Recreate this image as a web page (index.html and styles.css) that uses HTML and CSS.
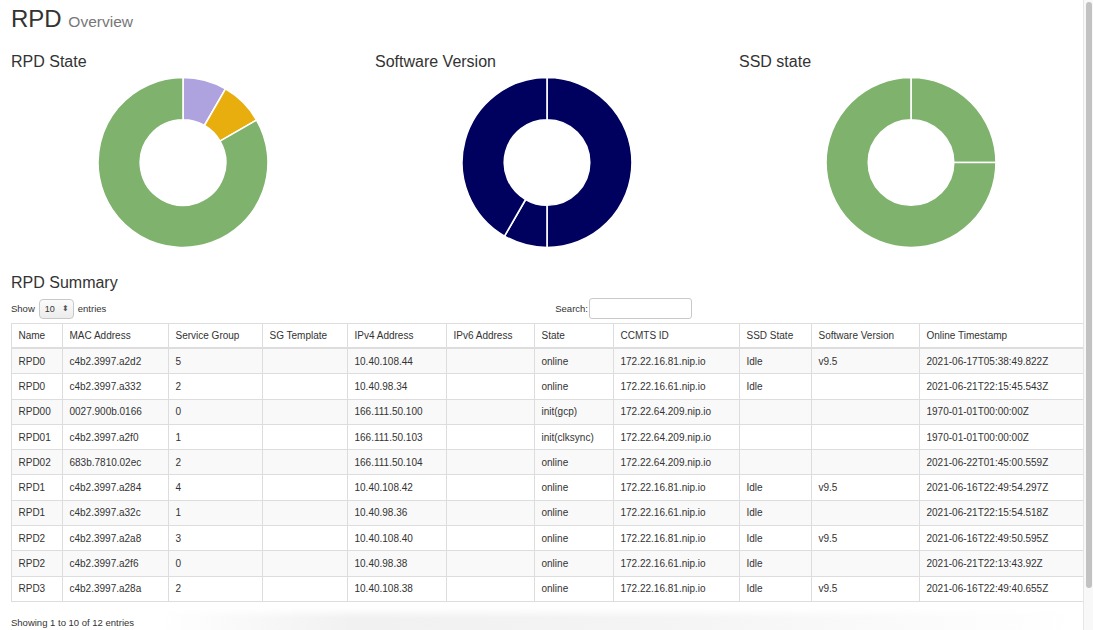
FILE: index.html
```html
<!DOCTYPE html>
<html lang="en">
<head>
<meta charset="utf-8">
<title>RPD Overview</title>
<link rel="stylesheet" href="styles.css">
</head>
<body>
<div class="page">
  <h1 class="page-title">RPD <small>Overview</small></h1>

  <div class="charts">
    <section class="chart">
      <h3 class="section-title">RPD State</h3>
      <svg class="donut" width="344" height="172" viewBox="0 0 344 172">
        <g stroke="#fff" stroke-width="1.6" stroke-linejoin="round">
          <path fill="#aea2df" d="M172 0.5 A85 85 0 0 1 214.5 11.9 L193.4 48.5 A42.75 42.75 0 0 0 172 42.75 Z"/>
          <path fill="#e7ae0d" d="M214.5 11.9 A85 85 0 0 1 245.6 43 L209 64.1 A42.75 42.75 0 0 0 193.4 48.5 Z"/>
          <path fill="#7eb26d" d="M245.6 43 A85 85 0 1 1 172 0.5 L172 42.75 A42.75 42.75 0 1 0 209 64.1 Z"/>
        </g>
      </svg>
    </section>
    <section class="chart">
      <h3 class="section-title">Software Version</h3>
      <svg class="donut" width="344" height="172" viewBox="0 0 344 172">
        <g fill="#00005e" stroke="#fff" stroke-width="1.6" stroke-linejoin="round">
          <path d="M172 0.5 A85 85 0 0 1 172 170.5 L172 128.25 A42.75 42.75 0 0 0 172 42.75 Z"/>
          <path d="M172 170.5 A85 85 0 0 1 129.5 159.1 L150.6 122.5 A42.75 42.75 0 0 0 172 128.25 Z"/>
          <path d="M129.5 159.1 A85 85 0 0 1 172 0.5 L172 42.75 A42.75 42.75 0 0 0 150.6 122.5 Z"/>
        </g>
      </svg>
    </section>
    <section class="chart">
      <h3 class="section-title">SSD state</h3>
      <svg class="donut" width="344" height="172" viewBox="0 0 344 172">
        <g fill="#7eb26d" stroke="#fff" stroke-width="1.6" stroke-linejoin="round">
          <path d="M172 0.5 A85 85 0 0 1 257 85.5 L214.75 85.5 A42.75 42.75 0 0 0 172 42.75 Z"/>
          <path d="M257 85.5 A85 85 0 1 1 172 0.5 L172 42.75 A42.75 42.75 0 1 0 214.75 85.5 Z"/>
        </g>
      </svg>
    </section>
  </div>

  <h3 class="section-title summary-title">RPD Summary</h3>

  <div class="dt-top">
    <label class="dt-length">Show
      <span class="select"><span class="select-value">10</span><span class="select-arrows">&#x2B0D;</span></span>
      entries</label>
    <label class="dt-filter">Search:<span class="search-input"></span></label>
  </div>

  <table class="rpd-table">
    <colgroup>
      <col class="w-name"><col class="w-mac"><col class="w-sg"><col class="w-sgt"><col class="w-ip4"><col class="w-ip6"><col class="w-state"><col class="w-ccmts"><col class="w-ssd"><col class="w-sw"><col class="w-ts">
    </colgroup>
    <thead>
      <tr>
        <th>Name</th><th>MAC Address</th><th>Service Group</th><th>SG Template</th><th>IPv4 Address</th><th>IPv6 Address</th><th>State</th><th>CCMTS ID</th><th>SSD State</th><th>Software Version</th><th>Online Timestamp</th>
      </tr>
    </thead>
    <tbody>
      <tr><td>RPD0</td><td>c4b2.3997.a2d2</td><td>5</td><td></td><td>10.40.108.44</td><td></td><td>online</td><td>172.22.16.81.nip.io</td><td>Idle</td><td>v9.5</td><td>2021-06-17T05:38:49.822Z</td></tr>
      <tr><td>RPD0</td><td>c4b2.3997.a332</td><td>2</td><td></td><td>10.40.98.34</td><td></td><td>online</td><td>172.22.16.61.nip.io</td><td>Idle</td><td></td><td>2021-06-21T22:15:45.543Z</td></tr>
      <tr><td>RPD00</td><td>0027.900b.0166</td><td>0</td><td></td><td>166.111.50.100</td><td></td><td>init(gcp)</td><td>172.22.64.209.nip.io</td><td></td><td></td><td>1970-01-01T00:00:00Z</td></tr>
      <tr><td>RPD01</td><td>c4b2.3997.a2f0</td><td>1</td><td></td><td>166.111.50.103</td><td></td><td>init(clksync)</td><td>172.22.64.209.nip.io</td><td></td><td></td><td>1970-01-01T00:00:00Z</td></tr>
      <tr><td>RPD02</td><td>683b.7810.02ec</td><td>2</td><td></td><td>166.111.50.104</td><td></td><td>online</td><td>172.22.64.209.nip.io</td><td></td><td></td><td>2021-06-22T01:45:00.559Z</td></tr>
      <tr><td>RPD1</td><td>c4b2.3997.a284</td><td>4</td><td></td><td>10.40.108.42</td><td></td><td>online</td><td>172.22.16.81.nip.io</td><td>Idle</td><td>v9.5</td><td>2021-06-16T22:49:54.297Z</td></tr>
      <tr><td>RPD1</td><td>c4b2.3997.a32c</td><td>1</td><td></td><td>10.40.98.36</td><td></td><td>online</td><td>172.22.16.61.nip.io</td><td>Idle</td><td></td><td>2021-06-21T22:15:54.518Z</td></tr>
      <tr><td>RPD2</td><td>c4b2.3997.a2a8</td><td>3</td><td></td><td>10.40.108.40</td><td></td><td>online</td><td>172.22.16.81.nip.io</td><td>Idle</td><td>v9.5</td><td>2021-06-16T22:49:50.595Z</td></tr>
      <tr><td>RPD2</td><td>c4b2.3997.a2f6</td><td>0</td><td></td><td>10.40.98.38</td><td></td><td>online</td><td>172.22.16.61.nip.io</td><td>Idle</td><td></td><td>2021-06-21T22:13:43.92Z</td></tr>
      <tr><td>RPD3</td><td>c4b2.3997.a28a</td><td>2</td><td></td><td>10.40.108.38</td><td></td><td>online</td><td>172.22.16.81.nip.io</td><td>Idle</td><td>v9.5</td><td>2021-06-16T22:49:40.655Z</td></tr>
    </tbody>
  </table>

  <div class="dt-bottom">
    <div class="dt-info">Showing 1 to 10 of 12 entries</div>
  </div>
</div>

<!-- window scrollbar, drawn over the right edge of the page -->
<div class="scrollbar" aria-hidden="true"><div class="scrollbar-thumb"></div></div>
</body>
</html>
```

FILE: styles.css
```css
body {
  margin: 0;
  background: #fff;
  color: #333;
  font-family: "Liberation Sans", Arial, Helvetica, sans-serif;
}

.page {
  padding: 4px 0 46px 11px;
}

.page-title {
  margin: 0;
  font-size: 24px;
  line-height: 30px;
  font-weight: normal;
  color: #333;
}
.page-title small {
  font-size: 15.5px;
  color: #777;
}

.section-title {
  margin: 0;
  font-size: 16px;
  line-height: 20px;
  font-weight: normal;
  color: #333;
}

.charts {
  display: grid;
  grid-template-columns: 364px 364px 364px;
  margin-top: 15px;
}

.donut {
  display: block;
  margin-top: 5px;
}

.summary-title {
  margin-top: 24px;
}

.dt-top {
  display: flex;
  justify-content: space-between;
  align-items: center;
  width: 681px;
  margin-top: 5px;
  font-size: 9.5px;
  height: 21px;
}

.dt-length,
.dt-filter {
  display: flex;
  align-items: center;
}

.select {
  display: inline-flex;
  align-items: center;
  justify-content: space-between;
  box-sizing: border-box;
  width: 35px;
  height: 20px;
  margin: 0 4px 0 4px;
  padding: 0 4px 0 5px;
  border: 1px solid #c8c8c8;
  border-radius: 4px;
  background: linear-gradient(#fbfbfb, #ececec);
  font-size: 9px;
  color: #333;
}
.select-arrows {
  font-size: 8px;
  color: #555;
}

.search-input {
  display: inline-block;
  box-sizing: border-box;
  width: 103px;
  height: 21px;
  margin-left: 1px;
  border: 1px solid #c9c9c9;
  border-radius: 3px;
  background: #fff;
}

.rpd-table {
  margin-top: 4px;
  border-collapse: collapse;
  table-layout: fixed;
  width: 1072px;
  font-size: 10px;
  color: #333;
  border: 1px solid #ddd;
}

.w-name { width: 51px; }
.w-mac { width: 106px; }
.w-sg { width: 94px; }
.w-sgt { width: 85px; }
.w-ip4 { width: 99px; }
.w-ip6 { width: 88px; }
.w-state { width: 79px; }
.w-ccmts { width: 126px; }
.w-ssd { width: 72px; }
.w-sw { width: 108px; }
.w-ts { width: 164px; }

.rpd-table th,
.rpd-table td {
  padding: 0 6.5px;
  border: 1px solid #ddd;
  text-align: left;
  white-space: nowrap;
  overflow: hidden;
}

.rpd-table th {
  height: 23px;
  font-weight: normal;
  border-bottom: 2px solid #ddd;
}

.rpd-table td {
  height: 24.3px;
}

.rpd-table tbody tr:nth-child(odd) {
  background: #f9f9f9;
}

/* info line sits on a soft shaded footer band */
.dt-bottom {
  width: 1072px;
  margin-top: 6px;
  padding-top: 8px;
  font-size: 9.5px;
  line-height: 14px;
  background:
    linear-gradient(to bottom, rgba(255,255,255,1) 0%, rgba(255,255,255,0) 45%),
    linear-gradient(to right, #fff 14%, #f1f1f1 32%, #f4f4f4 60%, #fbfbfb 85%, #fff 100%);
}

/* window scrollbar */
.scrollbar {
  position: fixed;
  top: 0;
  right: 0;
  bottom: 0;
  width: 9px;
  background: #f8f8f8;
  border-left: 1px solid #e6e6e6;
}
.scrollbar-thumb {
  margin: 2px 0 0 2px;
  width: 6px;
  height: 586px;
  border-radius: 3px;
  background: #c2c2c2;
}
```
